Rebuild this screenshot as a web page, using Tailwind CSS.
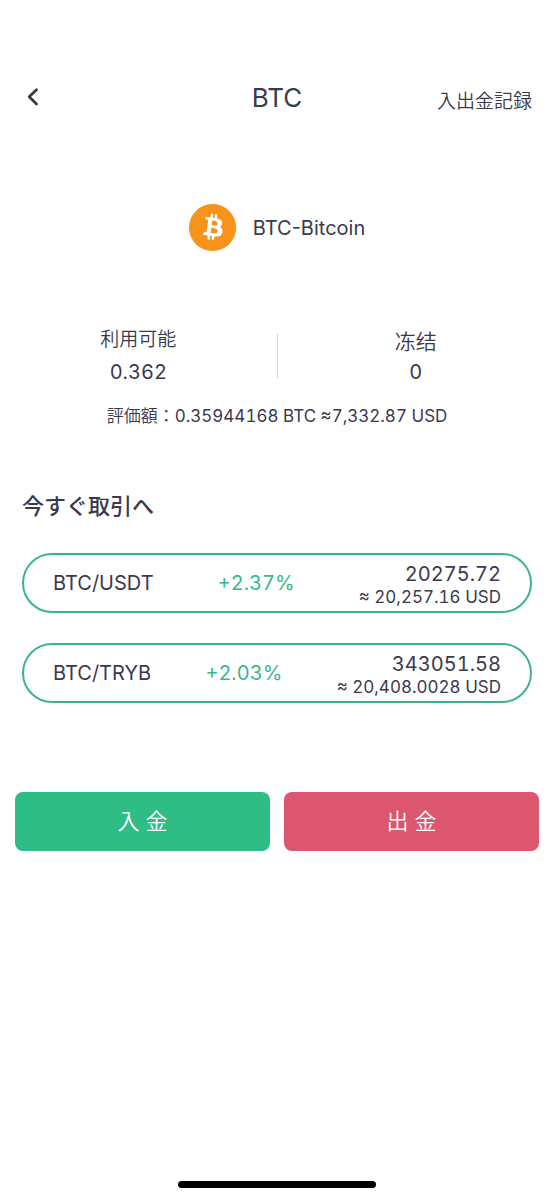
<!DOCTYPE html>
<html lang="ja">
<head>
    <meta charset="UTF-8">
    <meta name="viewport" content="width=device-width, initial-scale=1.0">
    <title>BTC</title>
    <script src="https://cdn.jsdelivr.net/npm/@tailwindcss/browser@4"></script>
</head>
<body class="min-h-screen flex flex-col bg-white text-[#3b3a4d] font-['Inter','Noto_Sans_CJK_JP',sans-serif]">
    <!-- Header -->
    <header class="grid grid-cols-[1fr_auto_1fr] items-center h-14 mt-[70px] px-[22px]">
        <button type="button" aria-label="戻る" class="justify-self-start w-6 h-6">
            <svg viewBox="0 0 24 24" class="w-6 h-6" fill="none" stroke="currentColor" stroke-width="2.8" stroke-linecap="round" stroke-linejoin="round">
                <path d="M14.5 3.7L7.2 10.8L14.5 17.9"/>
            </svg>
        </button>
        <h1 class="text-[26px] leading-8">BTC</h1>
        <a href="#" class="justify-self-end pt-2 text-[19px] leading-8 font-[350]">入出金記録</a>
    </header>

    <main>
        <!-- Coin -->
        <div class="flex items-center justify-center gap-4 mt-[78px]">
            <svg viewBox="0 0 32 32" class="w-12 h-12" aria-hidden="true">
                <circle cx="15.7" cy="15.7" r="15.7" fill="#f7931a"/>
                <path fill="#fff" transform="translate(15.9 15.3) rotate(-6) scale(.9) translate(-16 -16)" d="M23.189 14.02c.314-2.096-1.283-3.223-3.465-3.975l.708-2.84-1.728-.43-.69 2.765c-.454-.114-.92-.22-1.385-.326l.695-2.783L15.596 6l-.708 2.839c-.376-.086-.746-.17-1.104-.26l.002-.009-2.384-.595-.46 1.846s1.283.294 1.256.312c.7.175.826.638.805 1.006l-.806 3.235c.048.012.11.03.18.057l-.183-.045-1.13 4.532c-.086.212-.303.531-.793.41.018.025-1.256-.313-1.256-.313l-.858 1.978 2.25.561c.418.105.828.215 1.231.318l-.715 2.872 1.727.43.708-2.84c.472.127.93.245 1.378.357l-.706 2.828 1.728.43.715-2.866c2.948.558 5.164.333 6.097-2.333.752-2.146-.037-3.385-1.588-4.192 1.13-.26 1.98-1.003 2.207-2.538zm-3.95 5.538c-.533 2.147-4.148.986-5.32.695l.95-3.805c1.172.293 4.929.872 4.37 3.11zm.535-5.569c-.487 1.953-3.495.96-4.47.717l.86-3.45c.975.243 4.118.696 3.61 2.733z"/>
            </svg>
            <span class="text-xl">BTC-Bitcoin</span>
        </div>

        <!-- Balances -->
        <dl class="grid grid-cols-[1fr_auto_1fr] items-center text-center mt-[72px]">
            <div>
                <dt class="text-[19px] leading-8 font-[350]">利用可能</dt>
                <dd class="text-xl leading-8 tabular-nums">0.362</dd>
            </div>
            <div class="w-px h-11 bg-[#d4d4d8]"></div>
            <div>
                <dt lang="zh-CN" class="text-[21px] leading-8 font-[350] font-['Noto_Sans_CJK_SC',sans-serif]">冻结</dt>
                <dd class="text-xl leading-8 tabular-nums">0</dd>
            </div>
        </dl>
        <p class="mt-4 text-center text-[17px] leading-6 tabular-nums"><span class="font-[350]">評価額：</span>0.35944168 BTC ≈7,332.87 USD</p>

        <!-- Pairs -->
        <section class="mt-[62px] px-[22px]">
            <h2 class="text-[22px] leading-8 font-medium">今すぐ取引へ</h2>
            <ul class="mt-[31px] space-y-[30px]">
                <li>
                    <a href="#" class="flex items-center justify-between h-[60px] px-[29px] rounded-full border-2 border-[#3db588]">
                        <span class="text-xl">BTC/USDT</span>
                        <span class="text-xl text-[#3db588] tabular-nums">+2.37%</span>
                        <span class="pt-1 text-right tabular-nums">
                            <span class="block text-xl leading-6">20275.72</span>
                            <span class="block text-[17px] leading-[22px]">≈ 20,257.16 USD</span>
                        </span>
                    </a>
                </li>
                <li>
                    <a href="#" class="flex items-center justify-between h-[60px] px-[29px] rounded-full border-2 border-[#3db588]">
                        <span class="text-xl">BTC/TRYB</span>
                        <span class="text-xl text-[#3db588] tabular-nums">+2.03%</span>
                        <span class="pt-1 text-right tabular-nums">
                            <span class="block text-xl leading-6">343051.58</span>
                            <span class="block text-[17px] leading-[22px]">≈ 20,408.0028 USD</span>
                        </span>
                    </a>
                </li>
            </ul>
        </section>

        <!-- Actions -->
        <div class="grid grid-cols-2 gap-[14px] mt-[89px] px-[15px] text-[22px] font-[350] text-white">
            <button type="button" class="h-[59px] rounded-lg bg-[#2ebd85]">入 金</button>
            <button type="button" class="h-[59px] rounded-lg bg-[#db566e]">出 金</button>
        </div>
    </main>

    <!-- Home indicator -->
    <div class="mt-auto mb-3 mx-auto w-[198px] h-[7px] rounded-full bg-black"></div>
</body>
</html>
